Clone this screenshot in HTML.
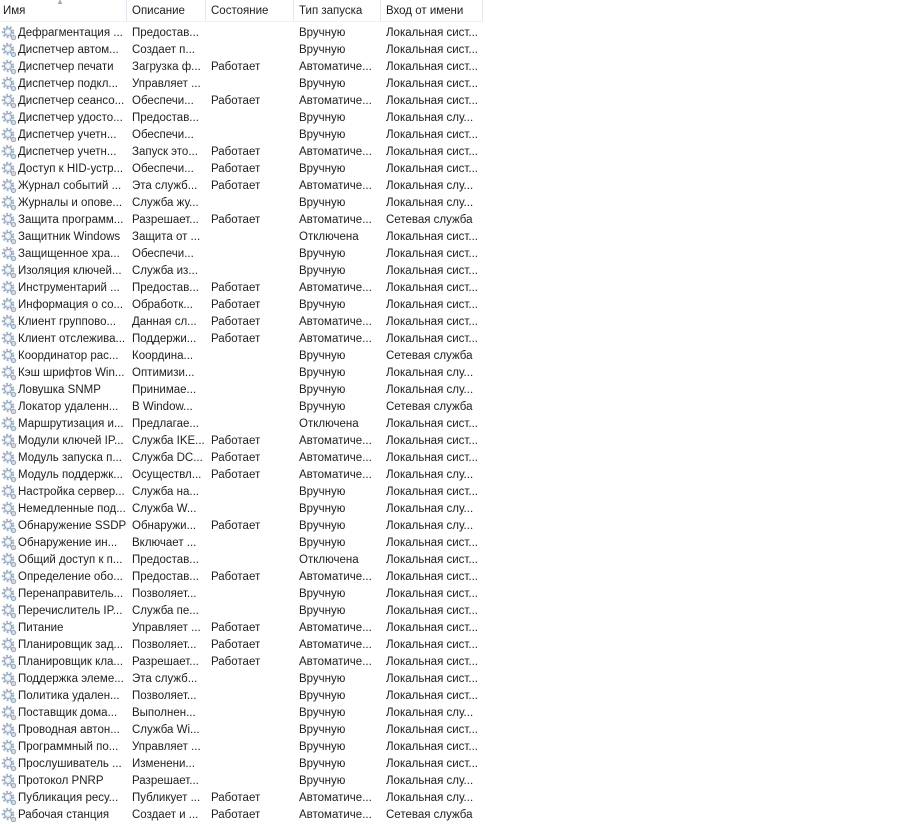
<!DOCTYPE html>
<html><head><meta charset="utf-8"><style>
body{margin:0;width:909px;height:822px;background:#fff;overflow:hidden;font-family:"Liberation Sans","DejaVu Sans",sans-serif;font-size:11.5px;color:#1e1e1e}
.hd{position:absolute;top:0;left:0;width:483px;height:21px;border-bottom:1px solid #eef0f3;}
.hd span{position:absolute;top:5px}
.sep{position:absolute;top:0;width:1px;height:21px;background:#e3e8ee}
.arr{position:absolute;left:56px;top:-3px;color:#9aaec4;font-size:8px}
.r{position:absolute;left:0;height:17px;width:490px}
.r span{position:absolute;top:2px;white-space:nowrap;overflow:hidden}
.r svg{position:absolute;left:1px;top:0px}
.a{left:18px;width:108px}.b{left:132px;width:72px}.c{left:211px}.d{left:299px}.e{left:386px}
</style></head><body>
<div class="hd"><span style="left:3px">Имя</span><span style="left:132px">Описание</span><span style="left:211px">Состояние</span><span style="left:299px">Тип запуска</span><span style="left:386px">Вход от имени</span>
<div class="arr">▲</div>
<div class="sep" style="left:126px"></div><div class="sep" style="left:205px"></div><div class="sep" style="left:293px"></div><div class="sep" style="left:380px"></div><div class="sep" style="left:482px"></div></div>
<svg width="0" height="0" style="position:absolute"><defs><g id="g"><circle cx="7" cy="7" r="5" fill="none" stroke="#a9b8c9" stroke-width="2.6" stroke-dasharray="2 1.6"/><circle cx="7" cy="7" r="3.6" fill="#e4eaf0" stroke="#94a5b9" stroke-width="1"/><circle cx="7" cy="7" r="1.4" fill="#fff"/><circle cx="12.5" cy="12.5" r="2.2" fill="#d3dbe4" stroke="#94a5b9" stroke-width="1"/></g></defs></svg>
<div id="rows"></div>
<script>
var d=[["Дефрагментация ...","Предостав...","","Вручную","Локальная сист..."],
["Диспетчер автом...","Создает п...","","Вручную","Локальная сист..."],
["Диспетчер печати","Загрузка ф...","Работает","Автоматиче...","Локальная сист..."],
["Диспетчер подкл...","Управляет ...","","Вручную","Локальная сист..."],
["Диспетчер сеансо...","Обеспечи...","Работает","Автоматиче...","Локальная сист..."],
["Диспетчер удосто...","Предостав...","","Вручную","Локальная слу..."],
["Диспетчер учетн...","Обеспечи...","","Вручную","Локальная сист..."],
["Диспетчер учетн...","Запуск это...","Работает","Автоматиче...","Локальная сист..."],
["Доступ к HID-устр...","Обеспечи...","Работает","Вручную","Локальная сист..."],
["Журнал событий ...","Эта служб...","Работает","Автоматиче...","Локальная слу..."],
["Журналы и опове...","Служба жу...","","Вручную","Локальная слу..."],
["Защита программ...","Разрешает...","Работает","Автоматиче...","Сетевая служба"],
["Защитник Windows","Защита от ...","","Отключена","Локальная сист..."],
["Защищенное хра...","Обеспечи...","","Вручную","Локальная сист..."],
["Изоляция ключей...","Служба из...","","Вручную","Локальная сист..."],
["Инструментарий ...","Предостав...","Работает","Автоматиче...","Локальная сист..."],
["Информация о со...","Обработк...","Работает","Вручную","Локальная сист..."],
["Клиент группово...","Данная сл...","Работает","Автоматиче...","Локальная сист..."],
["Клиент отслежива...","Поддержи...","Работает","Автоматиче...","Локальная сист..."],
["Координатор рас...","Координа...","","Вручную","Сетевая служба"],
["Кэш шрифтов Win...","Оптимизи...","","Вручную","Локальная слу..."],
["Ловушка SNMP","Принимае...","","Вручную","Локальная слу..."],
["Локатор удаленн...","В Window...","","Вручную","Сетевая служба"],
["Маршрутизация и...","Предлагае...","","Отключена","Локальная сист..."],
["Модули ключей IP...","Служба IKE...","Работает","Автоматиче...","Локальная сист..."],
["Модуль запуска п...","Служба DC...","Работает","Автоматиче...","Локальная сист..."],
["Модуль поддержк...","Осуществл...","Работает","Автоматиче...","Локальная слу..."],
["Настройка сервер...","Служба на...","","Вручную","Локальная сист..."],
["Немедленные под...","Служба W...","","Вручную","Локальная слу..."],
["Обнаружение SSDP","Обнаружи...","Работает","Вручную","Локальная слу..."],
["Обнаружение ин...","Включает ...","","Вручную","Локальная сист..."],
["Общий доступ к п...","Предостав...","","Отключена","Локальная сист..."],
["Определение обо...","Предостав...","Работает","Автоматиче...","Локальная сист..."],
["Перенаправитель...","Позволяет...","","Вручную","Локальная сист..."],
["Перечислитель IP...","Служба пе...","","Вручную","Локальная сист..."],
["Питание","Управляет ...","Работает","Автоматиче...","Локальная сист..."],
["Планировщик зад...","Позволяет...","Работает","Автоматиче...","Локальная сист..."],
["Планировщик кла...","Разрешает...","Работает","Автоматиче...","Локальная сист..."],
["Поддержка элеме...","Эта служб...","","Вручную","Локальная сист..."],
["Политика удален...","Позволяет...","","Вручную","Локальная сист..."],
["Поставщик дома...","Выполнен...","","Вручную","Локальная слу..."],
["Проводная автон...","Служба Wi...","","Вручную","Локальная сист..."],
["Программный по...","Управляет ...","","Вручную","Локальная сист..."],
["Прослушиватель ...","Изменени...","","Вручную","Локальная сист..."],
["Протокол PNRP","Разрешает...","","Вручную","Локальная слу..."],
["Публикация ресу...","Публикует ...","Работает","Автоматиче...","Локальная слу..."],
["Рабочая станция","Создает и ...","Работает","Автоматиче...","Сетевая служба"]];
var h="";d.forEach(function(r,i){h+='<div class="r" style="top:'+(25+i*17)+'px"><svg width="16" height="16"><use href="#g"/></svg><span class="a">'+r[0]+'</span><span class="b">'+r[1]+'</span><span class="c">'+r[2]+'</span><span class="d">'+r[3]+'</span><span class="e">'+r[4]+'</span></div>'});
document.getElementById("rows").innerHTML=h;
</script>
</body></html>
